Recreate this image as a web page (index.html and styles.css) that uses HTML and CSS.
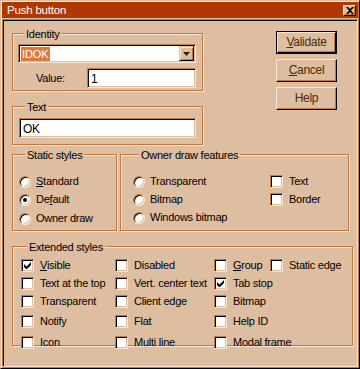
FILE: index.html
```html
<!DOCTYPE html>
<html>
<head>
<meta charset="utf-8">
<link rel="stylesheet" href="styles.css">
</head>
<body>
<div class="window">
  <div class="titlebar">
    <span class="title">Push button</span>
    <span class="close"><svg width="8" height="7" viewBox="0 0 8 7"><path d="M0 0h2l2 2 2-2h2L5 3.5 8 7H6L4 5 2 7H0l3-3.5z" fill="#000"/></svg></span>
  </div>
  <div class="client">
    <div class="top">
      <div class="leftcol">
        <fieldset class="group identity">
          <legend>Identity</legend>
          <div class="combo"><span class="sel">IDOK</span><span class="drop"><svg width="7" height="4" viewBox="0 0 7 4"><path d="M0 0h7L3.5 4z" fill="#3a2000"/></svg></span></div>
          <div class="valrow"><span class="vallabel">Value:</span><div class="edit valedit">1</div></div>
        </fieldset>
        <fieldset class="group textgrp">
          <legend>Text</legend>
          <div class="edit textedit">OK</div>
        </fieldset>
      </div>
      <div class="buttons">
        <div class="btn default"><span><u>V</u>alidate</span></div>
        <div class="btn"><span><u>C</u>ancel</span></div>
        <div class="btn"><span>Help</span></div>
      </div>
    </div>
    <div class="mid">
      <fieldset class="group static">
        <legend>Static styles</legend>
        <div class="radio-list">
          <div class="opt"><span class="radio"></span><span><u>S</u>tandard</span></div>
          <div class="opt"><span class="radio on"></span><span>De<u>f</u>ault</span></div>
          <div class="opt"><span class="radio"></span><span>Owner draw</span></div>
        </div>
      </fieldset>
      <fieldset class="group owner">
        <legend>Owner draw features</legend>
        <div class="owner-grid">
          <div class="opt"><span class="radio"></span><span>Transparent</span></div>
          <div class="opt cb"><span class="check"></span><span>Text</span></div>
          <div class="opt"><span class="radio"></span><span>Bitmap</span></div>
          <div class="opt cb"><span class="check"></span><span>Border</span></div>
          <div class="opt"><span class="radio"></span><span>Windows bitmap</span></div>
        </div>
      </fieldset>
    </div>
    <fieldset class="group extended">
      <legend>Extended styles</legend>
      <div class="ext-grid">
        <div class="opt cb"><span class="check on"><svg width="7" height="7" viewBox="0 0 7 7"><path d="M0 2v3l2 2h1l4-4V0L2.5 4.5z" fill="#000"/></svg></span><span><u>V</u>isible</span></div>
        <div class="opt cb"><span class="check"></span><span>Disabled</span></div>
        <div class="opt cb"><span class="check"></span><span><u>G</u>roup</span></div>
        <div class="opt cb"><span class="check"></span><span>Static edge</span></div>

        <div class="opt cb"><span class="check"></span><span>Text at the top</span></div>
        <div class="opt cb"><span class="check"></span><span>Vert. center text</span></div>
        <div class="opt cb"><span class="check on"><svg width="7" height="7" viewBox="0 0 7 7"><path d="M0 2v3l2 2h1l4-4V0L2.5 4.5z" fill="#000"/></svg></span><span>Tab stop</span></div>
        <div class="opt"></div>

        <div class="opt cb"><span class="check"></span><span>Transparent</span></div>
        <div class="opt cb"><span class="check"></span><span>Client edge</span></div>
        <div class="opt cb"><span class="check"></span><span>Bitmap</span></div>
        <div class="opt"></div>

        <div class="opt cb"><span class="check"></span><span>Notify</span></div>
        <div class="opt cb"><span class="check"></span><span>Flat</span></div>
        <div class="opt cb"><span class="check"></span><span>Help ID</span></div>
        <div class="opt"></div>

        <div class="opt cb"><span class="check"></span><span>Icon</span></div>
        <div class="opt cb"><span class="check"></span><span>Multi line</span></div>
        <div class="opt cb"><span class="check"></span><span>Modal frame</span></div>
      </div>
    </fieldset>
  </div>
</div>
</body>
</html>
```

FILE: styles.css
```css
:root {
  --bg: #debea0;
  --light: #f8e6d4;
  --shadow: #c07840;
  --dark: #000000;
  --title: #b03800;
  --sel: #e0783c;
}
* { box-sizing: border-box; }
html, body { margin: 0; padding: 0; background: var(--bg); }
body {
  font-family: "Liberation Sans", Arial, sans-serif;
  font-size: 11px;
  letter-spacing: -0.25px;
  color: #000;
  line-height: 13px;
}
u { text-decoration: underline; text-underline-offset: 1px; }

.window {
  width: 360px;
  height: 369px;
  background: var(--bg);
  border: 1px solid;
  border-color: var(--bg) var(--dark) var(--dark) var(--bg);
  box-shadow: inset 1px 1px 0 var(--light), inset -1px -1px 0 var(--shadow);
  padding: 1px;
  display: flex;
  flex-direction: column;
}
.titlebar {
  height: 16px;
  background: var(--title);
  color: #fff;
  display: flex;
  align-items: center;
  justify-content: space-between;
  padding: 0 2px 0 5px;
  font-size: 11.5px;
}
.title { letter-spacing: -0.2px; }
.close {
  width: 13px;
  height: 11px;
  background: var(--bg);
  border: 1px solid;
  border-color: var(--light) var(--dark) var(--dark) var(--light);
  box-shadow: inset -1px -1px 0 var(--shadow);
  display: flex;
  align-items: center;
  justify-content: center;
}
.close svg { display: block; }

.client {
  flex: 1;
  margin-top: 1px;
  border: 1px solid;
  border-color: var(--shadow) var(--light) var(--light) var(--shadow);
  box-shadow: inset 1px 1px 0 var(--dark), inset -1px -1px 0 var(--bg);
  padding: 5px 4px 0 9px;
  display: flex;
  flex-direction: column;
}

.group {
  margin: 0;
  border: 1px solid var(--shadow);
  box-shadow: inset 1px 1px 0 var(--light), 1px 1px 0 var(--light);
  min-inline-size: 0;
}
.group legend {
  padding: 3px 2px 0 2px;
  margin-left: 6px;
  background: var(--bg);
  line-height: 13px;
}

.top { display: flex; }
.leftcol { display: flex; flex-direction: column; width: 191px; }

.identity { padding: 3px 6px 2px 5px; height: 66px; }
.combo {
  height: 19px;
  background: #fff;
  border: 1px solid;
  border-color: var(--shadow) var(--light) var(--light) var(--shadow);
  box-shadow: inset 1px 1px 0 var(--dark), inset -1px -1px 0 var(--bg);
  display: flex;
  align-items: center;
  justify-content: space-between;
  padding: 1px 1px 1px 2px;
}
.sel {
  background: var(--sel);
  color: #fff;
  padding: 0 1px;
  line-height: 14px;
  letter-spacing: -0.1px;
}
.drop {
  width: 15px;
  height: 15px;
  background: var(--bg);
  border: 1px solid;
  border-color: var(--bg) var(--dark) var(--dark) var(--bg);
  box-shadow: inset 1px 1px 0 var(--light), inset -1px -1px 0 var(--shadow);
  display: flex;
  align-items: center;
  justify-content: center;
}
.drop svg { display: block; }

.valrow { display: flex; align-items: center; margin-top: 5px; }
.vallabel { width: 69px; padding-left: 18px; }
.edit {
  background: #fff;
  border: 1px solid;
  border-color: var(--shadow) var(--light) var(--light) var(--shadow);
  box-shadow: inset 1px 1px 0 var(--dark), inset -1px -1px 0 var(--bg);
  height: 20px;
  padding: 3px 3px;
  line-height: 14px;
  font-size: 12px;
}
.valedit { flex: 1; }
.textgrp { margin-top: 7px; padding: 4px 6px 4px 6px; height: 47px; }

.buttons {
  display: flex;
  flex-direction: column;
  gap: 5px;
  margin-left: 73px;
  margin-top: 6px;
}
.btn {
  width: 61px;
  height: 23px;
  background: var(--bg);
  border: 1px solid;
  border-color: var(--light) var(--dark) var(--dark) var(--light);
  box-shadow: inset -1px -1px 0 var(--shadow);
  display: flex;
  align-items: center;
  justify-content: center;
  color: #4a2a08;
  font-size: 12px;
  letter-spacing: -0.3px;
}
.btn.default {
  outline: 1px solid var(--dark);
  outline-offset: 0;
  width: 59px;
  height: 21px;
  margin: 1px;
}

.mid { display: flex; gap: 3px; margin-top: 1px; }
.static { width: 105px; padding: 13px 6px 4px 6px; height: 85px; }
.owner { width: 229px; padding: 13px 6px 4px 12px; height: 85px; }

.opt { display: flex; align-items: center; gap: 5px; height: 13px; white-space: nowrap; }
.opt.cb { gap: 6px; }
.radio-list { display: flex; flex-direction: column; }
.radio-list .opt + .opt { margin-top: 5px; }
.radio-list .opt:last-child { margin-top: 6px; }

.radio {
  width: 12px;
  height: 12px;
  border-radius: 50%;
  background: #fff;
  border: 1px solid;
  border-color: var(--shadow) var(--light) var(--light) var(--shadow);
  box-shadow: inset 1px 1px 0 var(--dark), inset -1px -1px 0 var(--bg);
  flex: none;
  display: flex;
  align-items: center;
  justify-content: center;
}
.radio.on::after {
  content: "";
  width: 4px;
  height: 4px;
  border-radius: 50%;
  background: #000;
}
.check {
  width: 13px;
  height: 13px;
  background: #fff;
  border: 1px solid;
  border-color: var(--shadow) var(--light) var(--light) var(--shadow);
  box-shadow: inset 1px 1px 0 var(--dark), inset -1px -1px 0 var(--bg);
  flex: none;
  display: flex;
  align-items: center;
  justify-content: center;
}
.check svg { display: block; }

.owner-grid {
  display: grid;
  grid-template-columns: 137px auto;
  row-gap: 5px;
}

.extended { margin-top: 7px; padding: 5px 6px 4px 8px; height: 108px; }
.ext-grid {
  display: grid;
  grid-template-columns: 94px 99px 56px auto;
  grid-template-rows: 18px 18px 20px 21px 13px;
}
.ext-grid .opt { align-self: start; }
```
